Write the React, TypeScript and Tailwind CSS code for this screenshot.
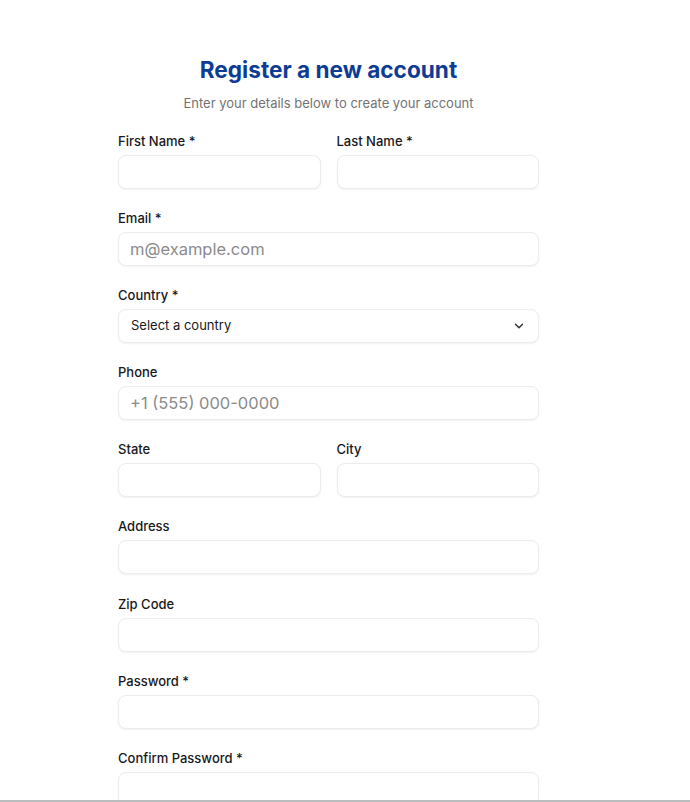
import React from "react";

function Label({ children }: { children: React.ReactNode }) {
  return (
    <label className="block text-[13px] leading-4 font-medium text-[#18181b] mb-[6px]">
      {children}
    </label>
  );
}

function Input({ placeholder }: { placeholder?: string }) {
  return (
    <input
      placeholder={placeholder}
      className="block w-full h-[34px] rounded-[8px] border border-[#ececec] bg-white px-[11px] text-[16.5px] text-[#18181b] placeholder:text-[#8b8b8b] shadow-[0_1px_2px_rgba(0,0,0,0.06)] outline-none"
    />
  );
}

function Field({ label, placeholder }: { label: string; placeholder?: string }) {
  return (
    <div className="flex-1 min-w-0">
      <Label>{label}</Label>
      <Input placeholder={placeholder} />
    </div>
  );
}

export default function App() {
  return (
    <div className="min-h-screen bg-white font-['Inter',_'Liberation_Sans',_sans-serif]">
      <div className="ml-[118px] w-[421px] pt-[56px] pb-10">
        <h1 className="text-center text-[22.6px] leading-7 font-bold text-[#0c3c94]">
          Register a new account
        </h1>
        <p className="mt-[11px] text-center text-[13px] leading-4 text-[#737373]">
          Enter your details below to create your account
        </p>
        <div className="mt-[22px] flex flex-col gap-[21.1px]">
          <div className="flex gap-4">
            <Field label="First Name *" />
            <Field label="Last Name *" />
          </div>
          <Field label="Email *" placeholder="m@example.com" />
          <div>
            <Label>Country *</Label>
            <div className="flex h-[34px] w-full items-center justify-between rounded-[8px] border border-[#ececec] bg-white pl-3 pr-[12px] shadow-[0_1px_2px_rgba(0,0,0,0.06)]">
              <span className="text-[13px] text-[#18181b]">Select a country</span>
              <svg width="14" height="14" viewBox="0 0 24 24" fill="none" stroke="#333" strokeWidth="2.5" strokeLinecap="round" strokeLinejoin="round">
                <path d="m6 9 6 6 6-6" />
              </svg>
            </div>
          </div>
          <Field label="Phone" placeholder="+1 (555) 000-0000" />
          <div className="flex gap-4">
            <Field label="State" />
            <Field label="City" />
          </div>
          <Field label="Address" />
          <Field label="Zip Code" />
          <Field label="Password *" />
          <Field label="Confirm Password *" />
        </div>
      </div>
      <div className="fixed bottom-0 left-0 right-0 h-[2px] bg-[#b9bdbd]" />
    </div>
  );
}
